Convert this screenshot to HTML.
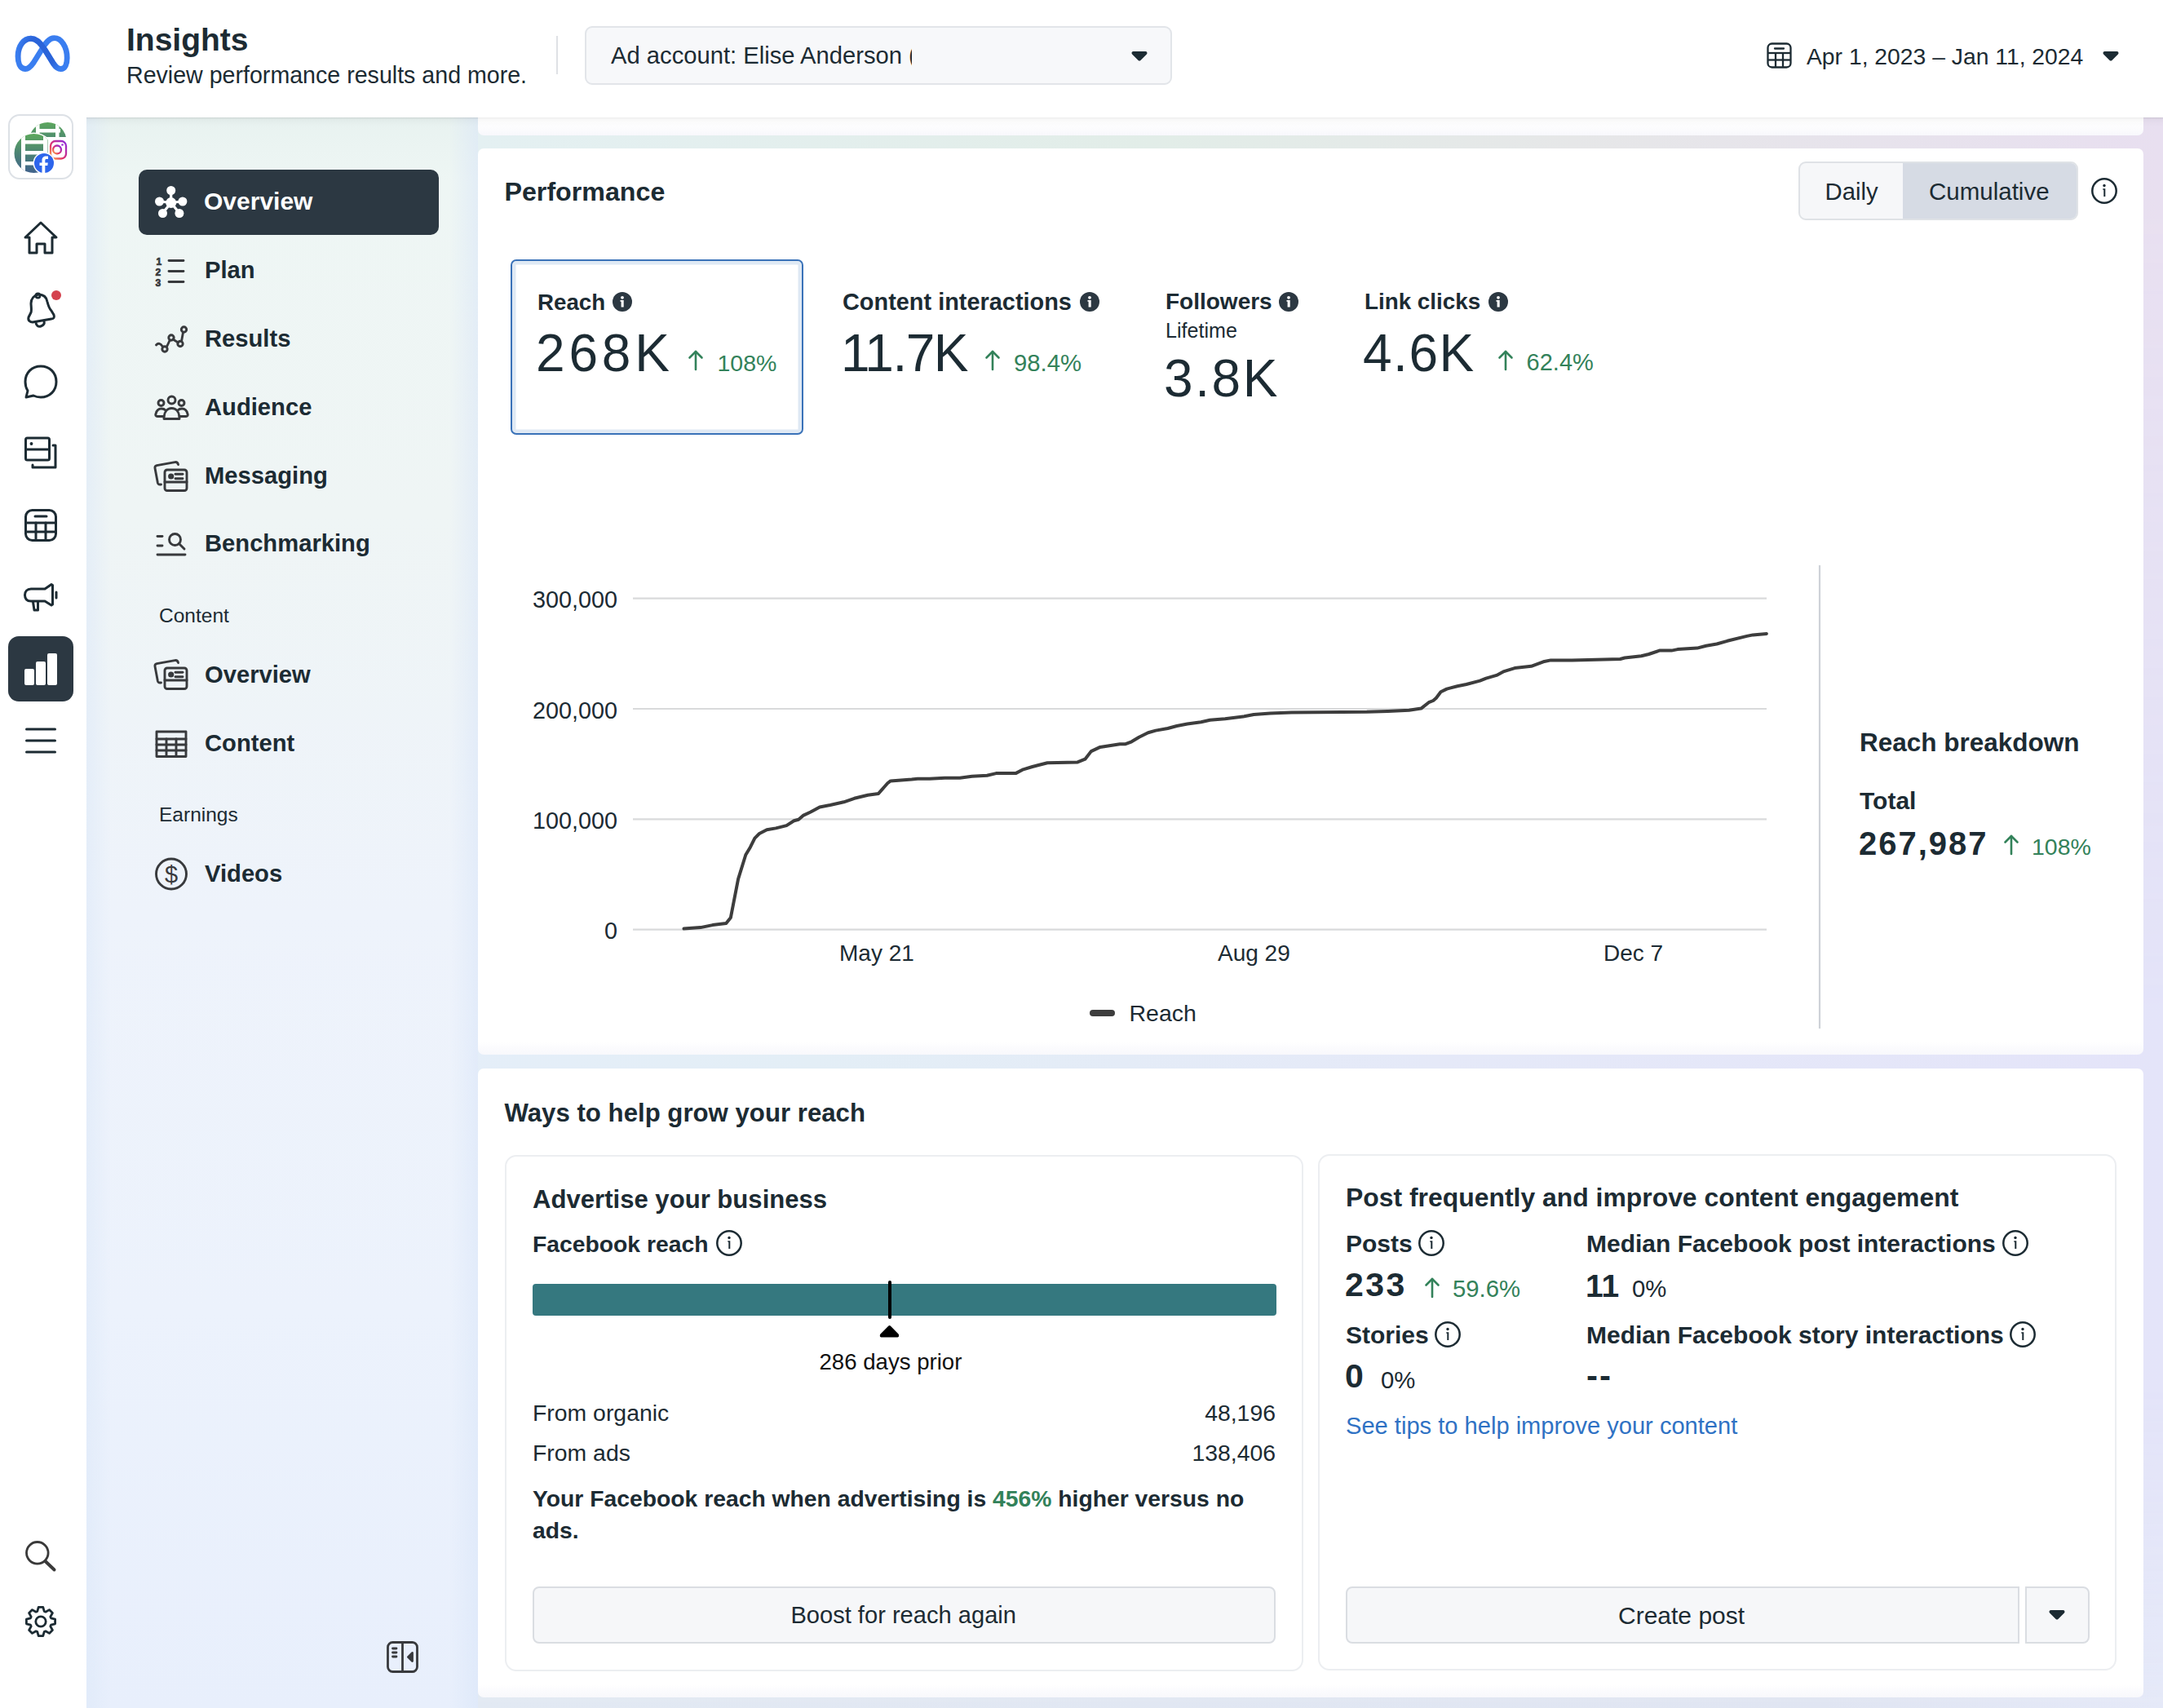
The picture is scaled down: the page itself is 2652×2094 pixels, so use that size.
<!DOCTYPE html>
<html><head><meta charset="utf-8">
<style>
*{box-sizing:border-box;margin:0;padding:0}
html,body{width:2652px;height:2094px;overflow:hidden;background:#fff}
body{position:relative;font-family:"Liberation Sans",sans-serif;color:#1c2b33}
.a{position:absolute}
.t{position:absolute;white-space:nowrap;line-height:1;font-size:var(--s);top:calc(var(--b) - var(--s)*0.8465)}
.b{font-weight:bold}
.g{color:#33825a}
svg{position:absolute;overflow:visible}
#bg{left:106px;top:144px;width:2546px;height:1950px;background:linear-gradient(90deg,#e6eefb 0%,#e3eef6 35%,#e5e9f8 65%,#e4e4f9 100%)}
#bgs{left:106px;top:144px;width:480px;height:1950px;background:linear-gradient(180deg,#e8f2f0 0%,#eef6f4 4%,#eff5f5 25%,#eef3fb 50%,#ecf2fc 75%,#e8effc 100%)}
#bgs2{left:106px;top:144px;width:480px;height:1950px;background:linear-gradient(90deg,rgba(220,232,248,0.55) 0px,rgba(220,232,248,0) 30px,rgba(215,228,248,0) 445px,rgba(215,228,248,0.5) 480px)}
#bgt{left:586px;top:144px;width:2066px;height:1100px;background:linear-gradient(90deg,#e4f0f2 0%,#e2ede8 40%,#e6e7e8 65%,#e8dff0 100%);-webkit-mask-image:linear-gradient(180deg,#000 0%,#000 10%,transparent 100%)}
#bgb{left:586px;top:1700px;width:2066px;height:394px;background:linear-gradient(90deg,#e2e9f3 0%,#e0e5f2 80%,#e5e9f8 100%);-webkit-mask-image:linear-gradient(180deg,transparent 0%,#000 100%)}
.card{position:absolute;background:linear-gradient(180deg,#fff 0,#fff calc(100% - 16px),#f8f8fc 100%);border-radius:7px}
</style></head><body>
<div id="bg" class="a"></div><div id="bgs" class="a"></div><div id="bgs2" class="a"></div><div id="bgt" class="a"></div><div id="bgb" class="a"></div>
<!-- top bar -->
<div class="a" style="left:0;top:0;width:2652px;height:144px;background:#fff;box-shadow:0 1px 2px rgba(0,0,0,0.06)"></div>
<!-- rail -->
<div class="a" style="left:0;top:0;width:106px;height:2094px;background:#fff"></div>

<!-- meta logo -->
<svg style="left:0;top:0" width="106" height="140" viewBox="0 0 106 140">
 <path d="M31,84.5 C24,84.5 22,76 22,69 C22,56 29,47.2 38,47.2 C45,47.2 50,53 55,61 L65.5,78 C68.5,82.5 71,84.5 74.5,84.5 C80,84.5 82.2,78 82.2,71 C82.2,57 75,46.6 66.5,46.6 C60,46.6 55.5,53 51,61 L41,77 C37.5,82 35,84.5 31,84.5 Z" fill="none" stroke="#3a7ef0" stroke-width="6.8" stroke-linejoin="round"/>
 <defs><radialGradient id="mlg" gradientUnits="userSpaceOnUse" cx="51" cy="63" r="38"><stop offset="0.5" stop-color="#2b64d9" stop-opacity="1"/><stop offset="0.8" stop-color="#2b64d9" stop-opacity="0"/></radialGradient></defs>
 <path d="M22,76 L22,70 C22,56 29,47.2 38,47.2 C45,47.2 50,53 55,61 L65.5,78 C68.5,82.5 71,84.5 74.5,84.5 C77.5,84.5 79.5,83 80.5,81" fill="none" stroke="url(#mlg)" stroke-width="6.9" stroke-linecap="butt"/>
</svg>

<div class="t b" style="--s:39px;--b:62px;left:155px">Insights</div>
<div class="t" style="--s:28.6px;--b:102px;left:155px">Review performance results and more.</div>
<div class="a" style="left:682px;top:44px;width:2px;height:47px;background:#dfe1e5"></div>

<!-- ad account dropdown -->
<div class="a" style="left:717px;top:32px;width:720px;height:72px;background:#f7f8fa;border:2px solid #e2e5e9;border-radius:9px"></div>
<div class="a" style="left:749px;top:40px;width:369px;height:55px;overflow:hidden">
 <div class="t" style="--s:29.2px;--b:38.8px;left:0">Ad account: Elise Anderson (Business)</div>
</div>
<svg style="left:1386px;top:62px" width="22" height="14" viewBox="0 0 22 14"><path d="M3.5,3 L18.5,3 L11,10.5 Z" fill="#1c2b33" stroke="#1c2b33" stroke-width="4" stroke-linejoin="round"/></svg>

<!-- date picker -->
<svg style="left:2166px;top:52px" width="32" height="32" viewBox="0 0 32 32" fill="none" stroke="#1c2b33" stroke-width="2.3">
 <rect x="1.5" y="1.5" width="28" height="29" rx="5"/><line x1="10" y1="7.5" x2="21" y2="7.5" stroke-linecap="round"/>
 <line x1="1.5" y1="13" x2="29.5" y2="13"/><line x1="1.5" y1="21.5" x2="29.5" y2="21.5"/>
 <line x1="11" y1="13" x2="11" y2="30.5"/><line x1="20" y1="13" x2="20" y2="30.5"/>
</svg>
<div class="t" style="--s:28.3px;--b:78.8px;left:2215px">Apr 1, 2023 – Jan 11, 2024</div>
<svg style="left:2577px;top:62px" width="22" height="14" viewBox="0 0 22 14"><path d="M3.5,3 L18.5,3 L11,10.5 Z" fill="#1c2b33" stroke="#1c2b33" stroke-width="4" stroke-linejoin="round"/></svg>


<!-- app icon -->
<div class="a" style="left:10px;top:140px;width:80px;height:80px;border:2.5px solid #dde1e6;border-radius:14px;background:#fff"></div>
<svg style="left:0;top:130px" width="106" height="100" viewBox="0 130 106 100">
 <defs>
  <linearGradient id="gl" x1="0" y1="0" x2="0" y2="1"><stop offset="0" stop-color="#5fae58"/><stop offset="0.5" stop-color="#4c8474"/><stop offset="1" stop-color="#3f5e8e"/></linearGradient>
  <linearGradient id="ig" x1="0" y1="1" x2="1" y2="0"><stop offset="0" stop-color="#fcb045"/><stop offset="0.4" stop-color="#e1306c"/><stop offset="1" stop-color="#8a2be2"/></linearGradient>
  <clipPath id="c1"><circle cx="58.5" cy="173" r="23"/></clipPath>
  <clipPath id="c2"><circle cx="41.5" cy="188" r="24"/></clipPath>
 </defs>
 <g clip-path="url(#c1)"><rect x="30" y="145" width="60" height="60" fill="url(#gl)"/>
  <rect x="44" y="145" width="4.5" height="60" fill="#fff"/><rect x="68" y="145" width="4.5" height="60" fill="#fff"/>
  <rect x="44" y="158" width="30" height="4.5" fill="#fff"/><rect x="44" y="168" width="30" height="4.5" fill="#fff"/></g>
 <circle cx="41.5" cy="188" r="25.5" fill="#fff"/>
 <g clip-path="url(#c2)"><rect x="15" y="160" width="55" height="55" fill="url(#gl)"/>
  <rect x="26" y="160" width="5" height="60" fill="#fff"/><rect x="53" y="160" width="5" height="60" fill="#fff"/>
  <rect x="26" y="172" width="30" height="4.5" fill="#fff"/><rect x="26" y="185" width="30" height="4.5" fill="#fff"/><rect x="26" y="198" width="30" height="4.5" fill="#fff"/></g>
 <rect x="58.5" y="168" width="27" height="30" fill="#fff"/>
 <rect x="62" y="173" width="19" height="21.5" rx="6" fill="none" stroke="url(#ig)" stroke-width="2.3"/>
 <circle cx="70" cy="183.5" r="5" fill="none" stroke="url(#ig)" stroke-width="2.3"/>
 <circle cx="76.5" cy="177.5" r="1.3" fill="#9b2fd8"/>
 <circle cx="54" cy="200" r="13.5" fill="#fff"/>
 <circle cx="54" cy="200" r="12" fill="#2d65ec"/>
 <path d="M51.5,212 L51.5,203 L48.5,203 L48.5,199.5 L51.5,199.5 L51.5,196.5 C51.5,193 53.5,191.5 56.5,191.5 L59,191.5 L59,195 L57,195 C55.8,195 55.3,195.6 55.3,196.8 L55.3,199.5 L58.8,199.5 L58.3,203 L55.3,203 L55.3,212 Z" fill="#fff"/>
</svg>

<g></g>
<svg style="left:0;top:0" width="106" height="2094" viewBox="0 0 106 2094" fill="none" stroke="#1c2b33" stroke-width="3" stroke-linecap="round" stroke-linejoin="round">
 <!-- home -->
 <path d="M31,291 L50,273 L69,291 L64,291 L64,310 L55,310 L55,299 L45,299 L45,310 L36,310 L36,291 Z"/>
 <!-- bell -->
 <path d="M40,395 C37,395 34,393 35,389 L38,383 C39,380 38,375 38,372 C38,366 42,362 47,361 C53,361 57,364 58,370 C59,374 60,378 63,381 L66,386 C67,389 66,391 63,391 Z"/>
 <path d="M44,395 C44,399 47,401 50,400 C53,399 55,397 54,394"/>
 <circle cx="46.5" cy="362.5" r="2.6" stroke-width="2.6"/>
 <!-- chat -->
 <path d="M50,449 C61,449 69,457 69,468 C69,479 61,487 50,487 C46,487 43,486 41,485 L32,487 L34,479 C32,476 31,472 31,468 C31,457 39,449 50,449 Z"/>
 <!-- pages -->
 <rect x="31.5" y="537" width="29" height="27" rx="2"/>
 <line x1="31.5" y1="551" x2="60.5" y2="551"/>
 <circle cx="38.5" cy="544" r="1.2" fill="#1c2b33" stroke-width="1.5"/>
 <path d="M65,546 L68,546 L68,573 L40,573 L40,570"/>
 <!-- table -->
 <rect x="31.5" y="625.5" width="37" height="37" rx="8"/>
 <line x1="43" y1="633" x2="57" y2="633"/>
 <line x1="31.5" y1="641" x2="68.5" y2="641"/><line x1="31.5" y1="652" x2="68.5" y2="652"/>
 <line x1="44" y1="641" x2="44" y2="662"/><line x1="56" y1="641" x2="56" y2="662"/>
 <!-- megaphone -->
 <path d="M55,722 L38,722 C33,722 30.5,725.5 30.5,729.5 C30.5,734 33,737 38,737 L55,737 L63,742 L64.5,741 L64.5,717.5 L63,716.5 Z"/>
 <path d="M40.5,738 L42,748 L46.5,748 L46.5,738"/>
 <path d="M69,726 L69,733"/>
 <!-- hamburger -->
 <line x1="32.5" y1="894" x2="67.5" y2="894"/><line x1="32.5" y1="908" x2="67.5" y2="908"/><line x1="32.5" y1="922" x2="67.5" y2="922"/>
 <!-- search -->
 <circle cx="45.8" cy="1903.8" r="13.3" stroke="#3a3a3a" stroke-width="2.8"/>
 <line x1="55.5" y1="1914" x2="66.5" y2="1924.5" stroke="#3a3a3a" stroke-width="4"/>
 <!-- gear -->
 <circle cx="50" cy="1988" r="6.2" stroke-width="2.8"/>
 <path d="M45.81,1975.48 L47.22,1970.42 L52.78,1970.42 L54.19,1975.48 L55.89,1976.19 L60.46,1973.60 L64.40,1977.54 L61.81,1982.11 L62.52,1983.81 L67.58,1985.22 L67.58,1990.78 L62.52,1992.19 L61.81,1993.89 L64.40,1998.46 L60.46,2002.40 L55.89,1999.81 L54.19,2000.52 L52.78,2005.58 L47.22,2005.58 L45.81,2000.52 L44.11,1999.81 L39.54,2002.40 L35.60,1998.46 L38.19,1993.89 L37.48,1992.19 L32.42,1990.78 L32.42,1985.22 L37.48,1983.81 L38.19,1982.11 L35.60,1977.54 L39.54,1973.60 L44.11,1976.19 Z" stroke-width="2.8"/>
</svg>
<circle></circle>
<div class="a" style="left:63px;top:356px;width:12px;height:12px;border-radius:50%;background:#d4424e"></div>
<div class="a" style="left:10px;top:780px;width:80px;height:80px;border-radius:13px;background:#2c3842"></div>
<div class="a" style="left:30px;top:820px;width:12px;height:20px;border-radius:2px;background:#fff"></div>
<div class="a" style="left:44px;top:811px;width:12px;height:29px;border-radius:2px;background:#fff"></div>
<div class="a" style="left:58px;top:801px;width:12px;height:39px;border-radius:2px;background:#fff"></div>

<!--RAIL-->

<!-- sidebar nav -->
<div class="a" style="left:170px;top:208px;width:368px;height:80px;border-radius:10px;background:#2c3842"></div>
<svg style="left:0;top:0" width="600" height="1100" viewBox="0 0 600 1100">
 <g stroke="#fff" stroke-width="3.2"><line x1="209.7" y1="248.5" x2="209.7" y2="234"/><line x1="209.7" y1="248.5" x2="196" y2="247"/><line x1="209.7" y1="248.5" x2="223.3" y2="247"/><line x1="209.7" y1="248.5" x2="199.7" y2="261"/><line x1="209.7" y1="248.5" x2="219.7" y2="261"/></g>
 <g fill="#fff"><circle cx="209.7" cy="248.5" r="6.5"/><circle cx="209.7" cy="233.5" r="5.5"/><circle cx="195.5" cy="247" r="5.5"/><circle cx="223.9" cy="247" r="5.5"/><circle cx="199.5" cy="261.5" r="5.5"/><circle cx="219.9" cy="261.5" r="5.5"/></g>
 <g fill="none" stroke="#383a3d" stroke-width="2.8" stroke-linecap="round" stroke-linejoin="round">
  <!-- plan -->
  <line x1="207" y1="319.5" x2="225" y2="319.5"/><line x1="207" y1="332.5" x2="225" y2="332.5"/><line x1="207" y1="345.5" x2="225" y2="345.5"/>
 </g>
 <g font-family="Liberation Sans" font-weight="bold" font-size="12" fill="#383a3d" stroke="#383a3d" stroke-width="0.7"><text x="191.5" y="324.5">1</text><text x="190.5" y="337.5">2</text><text x="190.5" y="350.5">3</text></g>
 <g fill="none" stroke="#383a3d" stroke-width="2.9" stroke-linecap="round" stroke-linejoin="round">
  <!-- results -->
  <path d="M191.5,423 C194,420 197,421 199,424.5"/><path d="M204.5,425 L208,417.5"/><path d="M212,416 L218.5,420"/><path d="M222.5,418.5 L224.5,407.5"/>
  <circle cx="202" cy="428" r="3.2"/><circle cx="210" cy="414" r="3.2"/><circle cx="221" cy="421.5" r="3.2"/><circle cx="225.5" cy="404" r="3.2"/>
  <!-- audience -->
  <circle cx="210.5" cy="490.5" r="4.5"/><circle cx="197.5" cy="494" r="3.5"/><circle cx="222.5" cy="494" r="3.5"/>
  <path d="M201,513.5 C201,505 205,500.5 210.5,500.5 C216,500.5 220,505 220,513.5 Z"/>
  <path d="M201,510.5 L193,510.5 C191,510.5 190.5,509 191,507.5 C192,503 195,501 198,501 C200,501 202,502 203,503"/>
  <path d="M220,510.5 L228,510.5 C230,510.5 230.5,509 230,507.5 C229,503 226,501 223,501 C221,501 219,502 218,503"/>
  <!-- messaging -->
  <path d="M197.5,594 L196,594 C194.6,594 193.7,593.3 193.4,592 L190,574 C189.7,572.2 190.6,571 192.2,570.6 L214.5,566.6 C216.5,566.3 218,567.5 218.5,569.5"/>
  <rect x="202" y="576" width="27" height="25.5" rx="3"/>
  <line x1="202" y1="591" x2="229" y2="591"/>
  <line x1="215" y1="581.2" x2="224" y2="581.2"/><line x1="215" y1="586.8" x2="224" y2="586.8"/>
  <!-- benchmarking -->
  <line x1="193" y1="657.5" x2="199" y2="657.5"/><line x1="193" y1="669" x2="199" y2="669"/><line x1="193" y1="680" x2="227" y2="680"/>
  <circle cx="214.5" cy="661.5" r="7"/><line x1="219.5" y1="666.5" x2="226" y2="673"/>
  <!-- content overview -->
  <path d="M197.5,837 L196,837 C194.6,837 193.7,836.3 193.4,835 L190,817 C189.7,815.2 190.6,814 192.2,813.6 L214.5,809.6 C216.5,809.3 218,810.5 218.5,812.5"/>
  <rect x="202" y="819" width="27" height="25.5" rx="3"/>
  <line x1="202" y1="834" x2="229" y2="834"/>
  <line x1="215" y1="824.2" x2="224" y2="824.2"/><line x1="215" y1="829.8" x2="224" y2="829.8"/>
  <!-- content table -->
  <rect x="192" y="897" width="36" height="30.5"/>
  <line x1="192" y1="906" x2="228" y2="906"/><line x1="192" y1="913" x2="228" y2="913"/><line x1="192" y1="920" x2="228" y2="920"/>
  <line x1="204" y1="906" x2="204" y2="927.5"/><line x1="216" y1="906" x2="216" y2="927.5"/>
  <!-- videos -->
  <circle cx="210" cy="1071.5" r="18.5"/>
 </g>
 <g fill="#383a3d"><circle cx="209.7" cy="584" r="3.6"/><circle cx="209.7" cy="827" r="3.6"/></g>
 <text x="210" y="1082" text-anchor="middle" font-family="Liberation Sans" font-size="29" fill="#383a3d">$</text>
</svg>
<div class="t b" style="--s:30px;--b:257.5px;left:250px;color:#fff">Overview</div>
<div class="t b" style="--s:29.2px;--b:341.6px;left:251px">Plan</div>
<div class="t b" style="--s:29.2px;--b:425.7px;left:251px">Results</div>
<div class="t b" style="--s:29.2px;--b:509.7px;left:251px">Audience</div>
<div class="t b" style="--s:29.2px;--b:593.7px;left:251px">Messaging</div>
<div class="t b" style="--s:29.2px;--b:677px;left:251px">Benchmarking</div>
<div class="t" style="--s:24.5px;--b:764px;left:195px">Content</div>
<div class="t b" style="--s:29.2px;--b:837.8px;left:251px">Overview</div>
<div class="t b" style="--s:29.2px;--b:921.4px;left:251px">Content</div>
<div class="t" style="--s:24.5px;--b:1008px;left:195px">Earnings</div>
<div class="t b" style="--s:29.2px;--b:1081.8px;left:251px">Videos</div>
<!-- collapse icon -->
<svg style="left:474px;top:2012px" width="40" height="40" viewBox="0 0 40 40" fill="none" stroke="#383a3d" stroke-width="2.8" stroke-linecap="round" stroke-linejoin="round">
 <rect x="1.5" y="1.5" width="36" height="36" rx="6"/><line x1="19.5" y1="1.5" x2="19.5" y2="37.5"/>
 <line x1="7.5" y1="9" x2="12" y2="9"/><line x1="7.5" y1="14" x2="12" y2="14"/><line x1="7.5" y1="19" x2="12" y2="19"/>
 <path d="M31.5,14.5 L26.5,19.5 L31.5,24.5 Z" fill="#383a3d"/>
</svg>

<!--SIDEBAR-->

<!-- scrolled card above -->
<div class="card" style="left:586px;top:120px;width:2042px;height:46px;border-radius:0 0 7px 7px"></div>
<div class="a" style="left:106px;top:144px;width:2546px;height:12px;background:linear-gradient(180deg,rgba(0,0,0,0.075) 0px,rgba(0,0,0,0.03) 2px,rgba(0,0,0,0.01) 7px,rgba(0,0,0,0) 12px)"></div>

<!-- performance card -->
<div class="card" style="left:586px;top:182px;width:2042px;height:1111px"></div>
<div class="t b" style="--s:32.2px;--b:246px;left:618.5px">Performance</div>
<!-- toggle -->
<div class="a" style="left:2205px;top:198px;width:342.5px;height:72px;border:2px solid #dfe2e6;border-radius:9px;background:#f6f7f9;overflow:hidden">
 <div class="a" style="left:126px;top:-2px;width:216px;height:72px;background:#d6dbe4"></div>
</div>
<div class="t" style="--s:29.3px;--b:245px;left:2237.5px">Daily</div>
<div class="t" style="--s:29.5px;--b:245px;left:2365px">Cumulative</div>
<svg style="left:2564px;top:218px" width="32" height="32" viewBox="0 0 32 32"><circle cx="16" cy="16" r="14.7" fill="none" stroke="#1c2b33" stroke-width="2.5"/><circle cx="16" cy="9.5" r="1.7" fill="#1c2b33"/><path d="M14.3,13.2 L17.3,13.2 L17.3,23 L15.3,23 L15.3,14.8 L14.3,14.8 Z" fill="#1c2b33"/></svg>

<!-- metric tabs -->
<div class="a" style="left:626px;top:318px;width:359px;height:215px;border:2.5px solid #3a72b8;border-radius:7px;box-shadow:inset 0 0 0 4.5px #dfe9f4"></div>
<div class="t b" style="--s:27.7px;--b:380px;left:659px">Reach</div>
<svg style="left:751px;top:358px" width="24" height="24" viewBox="0 0 24 24"><circle cx="12" cy="12" r="12" fill="#2c3842"/><circle cx="12" cy="6.8" r="1.9" fill="#fff"/><path d="M9.5,10 L13.7,10 L13.7,18.5 L10.6,18.5 L10.6,11.8 L9.5,11.8 Z" fill="#fff"/></svg>
<div class="t" style="--s:64px;--b:455px;left:657px;letter-spacing:4.8px">268K</div>
<svg style="left:843px;top:429px" width="20" height="26" viewBox="0 0 20 26" fill="none" stroke="#33825a" stroke-width="2.6" stroke-linecap="round" stroke-linejoin="round"><line x1="10" y1="2" x2="10" y2="24"/><path d="M2.5,9.5 L10,2 L17.5,9.5"/></svg>
<div class="t g" style="--s:28.5px;--b:455px;left:879.5px">108%</div>

<div class="t b" style="--s:28.9px;--b:380px;left:1033px">Content interactions</div>
<svg style="left:1324px;top:358px" width="24" height="24" viewBox="0 0 24 24"><circle cx="12" cy="12" r="12" fill="#2c3842"/><circle cx="12" cy="6.8" r="1.9" fill="#fff"/><path d="M9.5,10 L13.7,10 L13.7,18.5 L10.6,18.5 L10.6,11.8 L9.5,11.8 Z" fill="#fff"/></svg>
<div class="t" style="--s:64px;--b:455px;left:1031px;letter-spacing:-1.5px">11.7K</div>
<svg style="left:1207px;top:429px" width="20" height="26" viewBox="0 0 20 26" fill="none" stroke="#33825a" stroke-width="2.6" stroke-linecap="round" stroke-linejoin="round"><line x1="10" y1="2" x2="10" y2="24"/><path d="M2.5,9.5 L10,2 L17.5,9.5"/></svg>
<div class="t g" style="--s:29.3px;--b:455px;left:1243px">98.4%</div>

<div class="t b" style="--s:28px;--b:380px;left:1429px">Followers</div>
<svg style="left:1568px;top:358px" width="24" height="24" viewBox="0 0 24 24"><circle cx="12" cy="12" r="12" fill="#2c3842"/><circle cx="12" cy="6.8" r="1.9" fill="#fff"/><path d="M9.5,10 L13.7,10 L13.7,18.5 L10.6,18.5 L10.6,11.8 L9.5,11.8 Z" fill="#fff"/></svg>
<div class="t" style="--s:25.1px;--b:414px;left:1429px">Lifetime</div>
<div class="t" style="--s:64px;--b:486px;left:1427px;letter-spacing:2.6px">3.8K</div>

<div class="t b" style="--s:27.8px;--b:380px;left:1673px">Link clicks</div>
<svg style="left:1825px;top:358px" width="24" height="24" viewBox="0 0 24 24"><circle cx="12" cy="12" r="12" fill="#2c3842"/><circle cx="12" cy="6.8" r="1.9" fill="#fff"/><path d="M9.5,10 L13.7,10 L13.7,18.5 L10.6,18.5 L10.6,11.8 L9.5,11.8 Z" fill="#fff"/></svg>
<div class="t" style="--s:64px;--b:455px;left:1671px;letter-spacing:1.5px">4.6K</div>
<svg style="left:1836px;top:429px" width="20" height="26" viewBox="0 0 20 26" fill="none" stroke="#33825a" stroke-width="2.6" stroke-linecap="round" stroke-linejoin="round"><line x1="10" y1="2" x2="10" y2="24"/><path d="M2.5,9.5 L10,2 L17.5,9.5"/></svg>
<div class="t g" style="--s:29px;--b:455px;left:1871.6px">62.4%</div>

<!-- chart -->
<svg style="left:0;top:0" width="2652" height="1300" viewBox="0 0 2652 1300">
 <g stroke="#d9dadb" stroke-width="2.2"><line x1="776" y1="733.6" x2="2166" y2="733.6"/><line x1="776" y1="869" x2="2166" y2="869"/><line x1="776" y1="1004.3" x2="2166" y2="1004.3"/><line x1="776" y1="1139.7" x2="2166" y2="1139.7"/></g>
 <line x1="2231" y1="693" x2="2231" y2="1261" stroke="#ced2d8" stroke-width="2.2"/>
 <path d="M838.5,1138.6 L858.9,1137.1 L873.7,1134.1 L890.3,1131.9 L895.9,1124.9 L905.1,1077.6 L914.3,1048.0 L919.9,1038.7 L925.4,1027.6 L931.0,1022.0 L940.2,1017.3 L951.3,1015.4 L964.3,1012.1 L973.5,1006.2 L979.1,1004.7 L984.6,999.9 L993.9,995.5 L1005.0,989.5 L1017.9,987.0 L1034.5,983.3 L1047.5,978.8 L1064.1,974.7 L1077.1,972.9 L1088.2,960.3 L1091.9,957.4 L1117.8,955.5 L1125.1,954.8 L1139.9,954.8 L1158.4,953.7 L1176.9,953.7 L1191.7,951.8 L1210.2,950.7 L1221.3,948.1 L1245.3,948.1 L1254.6,943.3 L1265.7,940.0 L1284.2,935.2 L1321.2,934.4 L1330.4,930.7 L1337.8,921.1 L1348.9,915.9 L1373.0,912.2 L1380.0,912.2 L1387.4,909.3 L1396.6,903.7 L1407.7,898.2 L1417.0,895.6 L1431.8,893.0 L1442.9,890.0 L1455.8,887.5 L1472.5,885.2 L1483.6,882.7 L1502.0,881.2 L1524.2,878.6 L1537.2,876.0 L1557.5,874.5 L1583.4,873.4 L1675.9,872.7 L1701.7,871.9 L1727.6,870.8 L1742.4,868.6 L1751.7,861.2 L1757.2,859.0 L1760.9,855.7 L1766.5,848.3 L1773.9,844.6 L1786.8,841.2 L1797.9,839.0 L1814.5,834.6 L1822.0,831.6 L1834.9,827.9 L1844.1,823.1 L1857.1,819.1 L1877.4,816.8 L1892.2,811.3 L1901.4,809.4 L1927.3,809.4 L1986.5,808.0 L1992.0,806.5 L2012.4,804.3 L2021.6,802.0 L2034.6,797.6 L2049.4,797.6 L2056.8,796.1 L2080.8,794.6 L2091.9,791.7 L2104.9,789.5 L2117.8,785.8 L2141.8,779.9 L2149.2,778.4 L2165.9,776.9" fill="none" stroke="#3d3d3d" stroke-width="4" stroke-linejoin="round" stroke-linecap="round"/>
 <line x1="1340" y1="1242" x2="1363" y2="1242" stroke="#3d3d3d" stroke-width="8" stroke-linecap="round"/>
</svg>
<div class="t" style="--s:28.8px;--b:745.5px;right:1895px">300,000</div>
<div class="t" style="--s:28.8px;--b:881px;right:1895px">200,000</div>
<div class="t" style="--s:28.8px;--b:1016px;right:1895px">100,000</div>
<div class="t" style="--s:28.8px;--b:1151.5px;right:1895px">0</div>
<div class="t" style="--s:28px;--b:1179px;left:1029px">May 21</div>
<div class="t" style="--s:28px;--b:1179px;left:1493px">Aug 29</div>
<div class="t" style="--s:28px;--b:1179px;left:1966px">Dec 7</div>
<div class="t" style="--s:28.5px;--b:1252px;left:1384.5px">Reach</div>

<div class="t b" style="--s:31.5px;--b:922px;left:2280px">Reach breakdown</div>
<div class="t b" style="--s:30px;--b:992.7px;left:2280px">Total</div>
<div class="t b" style="--s:40px;--b:1047.8px;left:2279px;letter-spacing:2px">267,987</div>
<svg style="left:2456px;top:1023px" width="20" height="26" viewBox="0 0 20 26" fill="none" stroke="#33825a" stroke-width="2.6" stroke-linecap="round" stroke-linejoin="round"><line x1="10" y1="2" x2="10" y2="24"/><path d="M2.5,9.5 L10,2 L17.5,9.5"/></svg>
<div class="t g" style="--s:28.5px;--b:1047.8px;left:2491px">108%</div>

<!-- ways card -->
<div class="card" style="left:586px;top:1310px;width:2042px;height:771px"></div>
<div class="t b" style="--s:31.2px;--b:1375px;left:618.5px">Ways to help grow your reach</div>
<div class="a" style="left:619px;top:1415.5px;width:979px;height:633px;border:2px solid #eceef1;border-radius:14px"></div>
<div class="a" style="left:1616px;top:1415px;width:979px;height:633px;border:2px solid #eceef1;border-radius:14px"></div>

<div class="t b" style="--s:31.1px;--b:1481px;left:653px">Advertise your business</div>
<div class="t b" style="--s:28.3px;--b:1535px;left:653px">Facebook reach</div>
<svg style="left:878px;top:1508px" width="32" height="32" viewBox="0 0 32 32"><circle cx="16" cy="16" r="14.7" fill="none" stroke="#1c2b33" stroke-width="2.5"/><circle cx="16" cy="9.5" r="1.7" fill="#1c2b33"/><path d="M14.3,13.2 L17.3,13.2 L17.3,23 L15.3,23 L15.3,14.8 L14.3,14.8 Z" fill="#1c2b33"/></svg>
<div class="a" style="left:653px;top:1574px;width:912px;height:39px;background:#35787f;border-radius:4px"></div>
<div class="a" style="left:1088.5px;top:1570px;width:4px;height:47px;background:#000;border-radius:2px"></div>
<svg style="left:1076px;top:1622px" width="30" height="20" viewBox="0 0 30 20"><path d="M14.6,3 C15,3 15.5,3.3 16,3.8 L25.5,13.5 C26.5,14.5 26.5,17.5 24.5,17.5 L4.5,17.5 C2.5,17.5 2.5,14.5 3.5,13.5 L13.2,3.8 C13.7,3.3 14.2,3 14.6,3 Z" fill="#000"/></svg>
<div class="t" style="--s:27.6px;--b:1679px;left:1004.5px;color:#111">286 days prior</div>
<div class="t" style="--s:28.4px;--b:1742.5px;left:653px">From organic</div>
<div class="t" style="--s:28.4px;--b:1742.5px;right:1088px;text-align:right">48,196</div>
<div class="t" style="--s:28.4px;--b:1790.6px;left:653px">From ads</div>
<div class="t" style="--s:28.4px;--b:1790.6px;right:1088px;text-align:right">138,406</div>
<div class="t b" style="--s:28.3px;--b:1847.3px;left:653px">Your Facebook reach when advertising is <span class="g">456%</span> higher versus no</div>
<div class="t b" style="--s:28.3px;--b:1885.8px;left:653px">ads.</div>
<div class="a" style="left:653px;top:1944.5px;width:911px;height:70.5px;background:#f6f7f9;border:2px solid #dadde2;border-radius:8px"></div>
<div class="t" style="--s:29.1px;--b:1991px;left:969.4px">Boost for reach again</div>

<div class="t b" style="--s:31.9px;--b:1480px;left:1650px">Post frequently and improve content engagement</div>
<div class="t b" style="--s:30px;--b:1535px;left:1650px">Posts</div>
<svg style="left:1739px;top:1508px" width="32" height="32" viewBox="0 0 32 32"><circle cx="16" cy="16" r="14.7" fill="none" stroke="#1c2b33" stroke-width="2.5"/><circle cx="16" cy="9.5" r="1.7" fill="#1c2b33"/><path d="M14.3,13.2 L17.3,13.2 L17.3,23 L15.3,23 L15.3,14.8 L14.3,14.8 Z" fill="#1c2b33"/></svg>
<div class="t b" style="--s:30px;--b:1535px;left:1945px">Median Facebook post interactions</div>
<svg style="left:2455px;top:1508px" width="32" height="32" viewBox="0 0 32 32"><circle cx="16" cy="16" r="14.7" fill="none" stroke="#1c2b33" stroke-width="2.5"/><circle cx="16" cy="9.5" r="1.7" fill="#1c2b33"/><path d="M14.3,13.2 L17.3,13.2 L17.3,23 L15.3,23 L15.3,14.8 L14.3,14.8 Z" fill="#1c2b33"/></svg>
<div class="t b" style="--s:41px;--b:1589.7px;left:1649px;letter-spacing:2.5px">233</div>
<svg style="left:1746px;top:1566px" width="20" height="26" viewBox="0 0 20 26" fill="none" stroke="#33825a" stroke-width="2.6" stroke-linecap="round" stroke-linejoin="round"><line x1="10" y1="2" x2="10" y2="24"/><path d="M2.5,9.5 L10,2 L17.5,9.5"/></svg>
<div class="t g" style="--s:29.3px;--b:1589.7px;left:1781px">59.6%</div>
<div class="t b" style="--s:39px;--b:1589.7px;left:1944px">11</div>
<div class="t" style="--s:29.3px;--b:1589.7px;left:2001px">0%</div>
<div class="t b" style="--s:30px;--b:1647px;left:1650px">Stories</div>
<div class="t b" style="--s:30px;--b:1647px;left:1945px">Median Facebook story interactions</div>
<svg style="left:1759px;top:1620px" width="32" height="32" viewBox="0 0 32 32"><circle cx="16" cy="16" r="14.7" fill="none" stroke="#1c2b33" stroke-width="2.5"/><circle cx="16" cy="9.5" r="1.7" fill="#1c2b33"/><path d="M14.3,13.2 L17.3,13.2 L17.3,23 L15.3,23 L15.3,14.8 L14.3,14.8 Z" fill="#1c2b33"/></svg>
<svg style="left:2464px;top:1620px" width="32" height="32" viewBox="0 0 32 32"><circle cx="16" cy="16" r="14.7" fill="none" stroke="#1c2b33" stroke-width="2.5"/><circle cx="16" cy="9.5" r="1.7" fill="#1c2b33"/><path d="M14.3,13.2 L17.3,13.2 L17.3,23 L15.3,23 L15.3,14.8 L14.3,14.8 Z" fill="#1c2b33"/></svg>
<div class="t b" style="--s:41px;--b:1701.5px;left:1649px">0</div>
<div class="t" style="--s:29.3px;--b:1701.5px;left:1693px">0%</div>
<div class="t b" style="--s:42px;--b:1701.5px;left:1945px;letter-spacing:2px">--</div>
<div class="t" style="--s:29.1px;--b:1759px;left:1650px;color:#2f72c4">See tips to help improve your content</div>
<div class="a" style="left:1649.5px;top:1944.5px;width:826px;height:70.5px;background:#f6f7f9;border:2px solid #dadde2;border-radius:8px 0 0 8px"></div>
<div class="a" style="left:2482.5px;top:1944.5px;width:79px;height:70.5px;background:#f6f7f9;border:2px solid #dadde2;border-radius:0 8px 8px 0"></div>
<div class="t" style="--s:30px;--b:1991px;left:1984px">Create post</div>
<svg style="left:2511px;top:1973px" width="22" height="14" viewBox="0 0 22 14"><path d="M3.5,3 L18.5,3 L11,10.5 Z" fill="#1c2b33" stroke="#1c2b33" stroke-width="4" stroke-linejoin="round"/></svg>

<!--CARDS-->
</body></html>
